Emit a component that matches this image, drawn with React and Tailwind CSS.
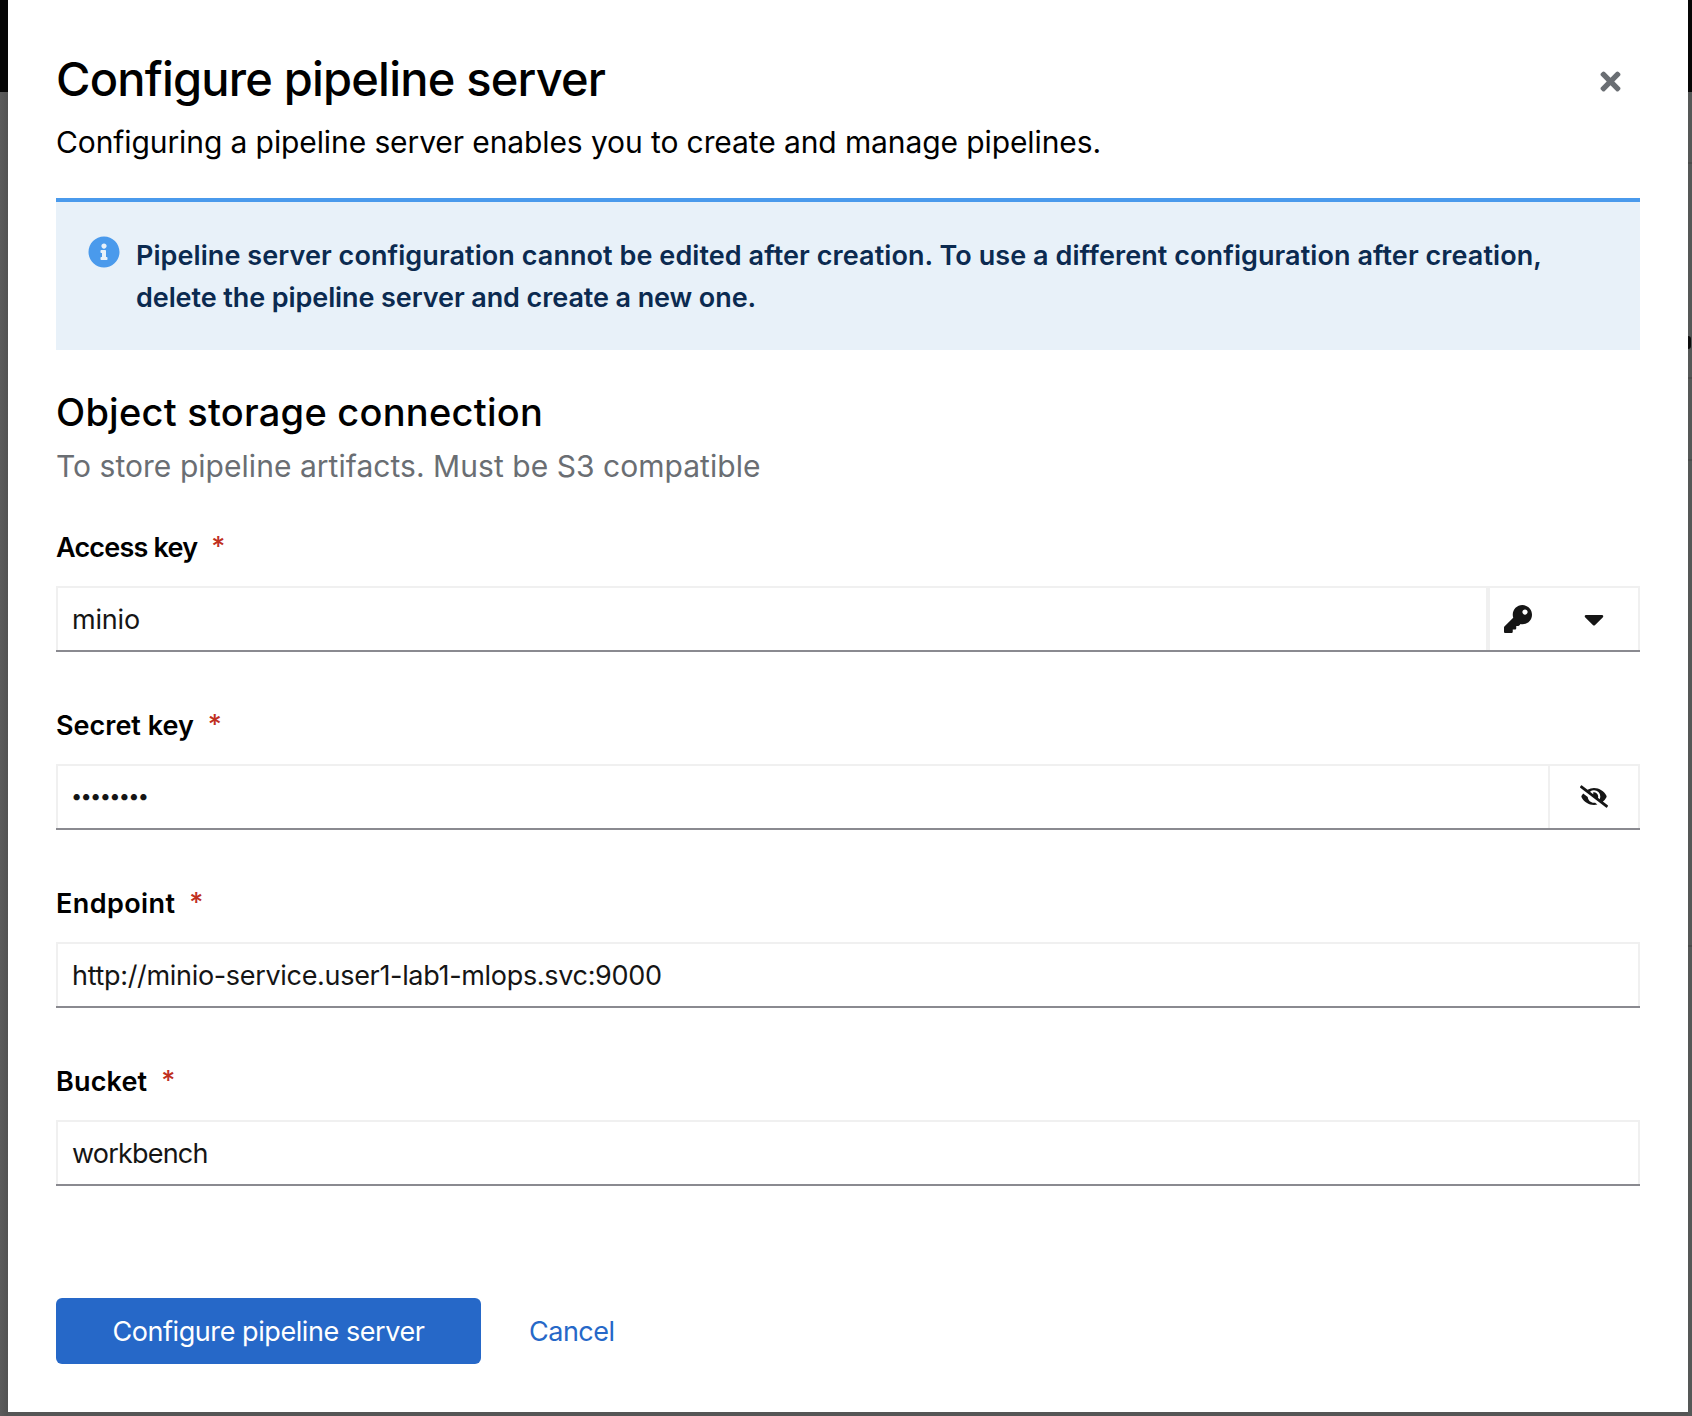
import { FaTimes, FaInfoCircle, FaKey, FaCaretDown, FaEyeSlash } from "react-icons/fa";

function InputBox({ children }) {
  return (
    <div className="h-[66px] border-b-2 border-[#8a8a90]">
      <div className="flex h-[64px] border-x-2 border-t-2 border-[#f0f0f0] bg-white text-[#151515]">{children}</div>
    </div>
  );
}

function Value({ className = "", children }) {
  return <div className={`flex flex-1 items-center pt-[2px] pl-[14px] text-[27px] ${className}`}>{children}</div>;
}

function Field({ label, labelClass, children }) {
  return (
    <div className="pb-[38px]">
      <div className="flex h-[74px] items-start pt-[18px] text-[27px] leading-[36px] font-semibold text-black">
        <span className={`whitespace-nowrap ${labelClass}`}>{label}</span>
        <span className="-mt-px ml-[14px] font-medium text-[#c0301f]">*</span>
      </div>
      {children}
    </div>
  );
}

export default function App() {
  return (
    <div className="flex h-[1416px] w-[1692px] overflow-hidden bg-[#555555] font-['Inter',sans-serif]">
      <aside className="flex w-2 shrink-0 flex-col bg-linear-to-r from-[#5b5b5b] to-[#525252]">
        <div className="h-[92px] bg-[#060606]" />
      </aside>
      <main className="h-[1412px] w-[1680px] shrink-0 bg-white px-12 pt-[48px]">
        <header className="flex h-[150px] justify-between">
          <div>
            <h1 className="-mt-px h-[65px] whitespace-nowrap text-[47px] leading-[64px] font-medium tracking-[-0.8px] text-black">
              Configure pipeline server
            </h1>
            <p className="h-[60px] whitespace-nowrap text-[30px] leading-[60px] tracking-[-0.1px] text-black">
              Configuring a pipeline server enables you to create and manage pipelines.
            </p>
          </div>
          <button aria-label="Close" className="mt-[18px] mr-[15px] flex h-[30px] w-[30px] items-center justify-center text-[29px] text-[#6a6e73]">
            <FaTimes />
          </button>
        </header>

        <section className="flex h-[152px] border-t-4 border-[#4a9aec] bg-[#e8f1f9] pt-[33px] pl-8">
          <FaInfoCircle className="mt-px h-8 w-8 shrink-0 text-[#4a9aec]" />
          <div className="ml-4 whitespace-nowrap text-[27px] leading-[42px] font-semibold text-[#0b2a50]">
            <p className="tracking-[0.07px]">Pipeline server configuration cannot be edited after creation. To use a different configuration after creation,</p>
            <p className="tracking-[-0.09px]">delete the pipeline server and create a new one.</p>
          </div>
        </section>

        <section className="h-[162px] pt-[36px]">
          <h2 className="h-[52px] whitespace-nowrap text-[38px] leading-[52px] font-medium tracking-[0.25px] text-black">
            Object storage connection
          </h2>
          <p className="h-[56px] whitespace-nowrap text-[30px] leading-[56px] tracking-[0.04px] text-[#6a6e73]">
            To store pipeline artifacts. Must be S3 compatible
          </p>
        </section>

        <form>
          <Field label="Access key" labelClass="tracking-[-0.8px]">
            <InputBox>
              <Value className="tracking-[-0.2px]">minio</Value>
              <div className="flex w-[152px] items-center justify-between border-l-4 border-[#f0f0f0] pr-[34px] pl-[14px]">
                <FaKey className="h-7 w-7" />
                <FaCaretDown className="h-8 w-5" />
              </div>
            </InputBox>
          </Field>
          <Field label="Secret key" labelClass="tracking-[0px]">
            <InputBox>
              <div className="flex flex-1 items-center pb-[2px] pl-[13px] text-[20px] tracking-[-1.7px]">••••••••</div>
              <div className="flex w-[90px] items-center justify-center border-l-2 border-[#f0f0f0] pb-px">
                <FaEyeSlash className="h-[23px] w-7" />
              </div>
            </InputBox>
          </Field>
          <Field label="Endpoint" labelClass="tracking-[0.4px]">
            <InputBox>
              <Value className="tracking-[-0.32px]">http://minio-service.user1-lab1-mlops.svc:9000</Value>
            </InputBox>
          </Field>
          <Field label="Bucket" labelClass="tracking-[0.15px]">
            <InputBox>
              <Value className="tracking-[-0.8px]">workbench</Value>
            </InputBox>
          </Field>
        </form>

        <footer className="mt-[74px] flex h-[66px] items-center">
          <button type="button" className="h-[66px] w-[425px] rounded-md bg-[#2668c8] pt-[3px] text-[27px] tracking-[-0.43px] whitespace-nowrap text-white">
            Configure pipeline server
          </button>
          <button type="button" className="ml-12 pt-[3px] text-[27px] tracking-[-0.5px] text-[#2668c8]">Cancel</button>
        </footer>
      </main>
      <aside className="flex w-1 shrink-0 flex-col bg-[#555857]">
        <div className="h-[92px] bg-[#060606]" />
        <div className="h-[72px] border-b-2 border-[#4a4c4b]" />
        <div className="h-[172px]" />
        <div className="h-[13px] w-[3px] rounded-r-full bg-[#0c0c0c]" />
        <div className="h-[30px] border-b-2 border-[#4a4c4b]" />
        <div className="h-[82px] border-b-2 border-[#4a4c4b]" />
        <div className="h-[486px] border-b-2 border-[#4a4c4b]" />
      </aside>
    </div>
  );
}
